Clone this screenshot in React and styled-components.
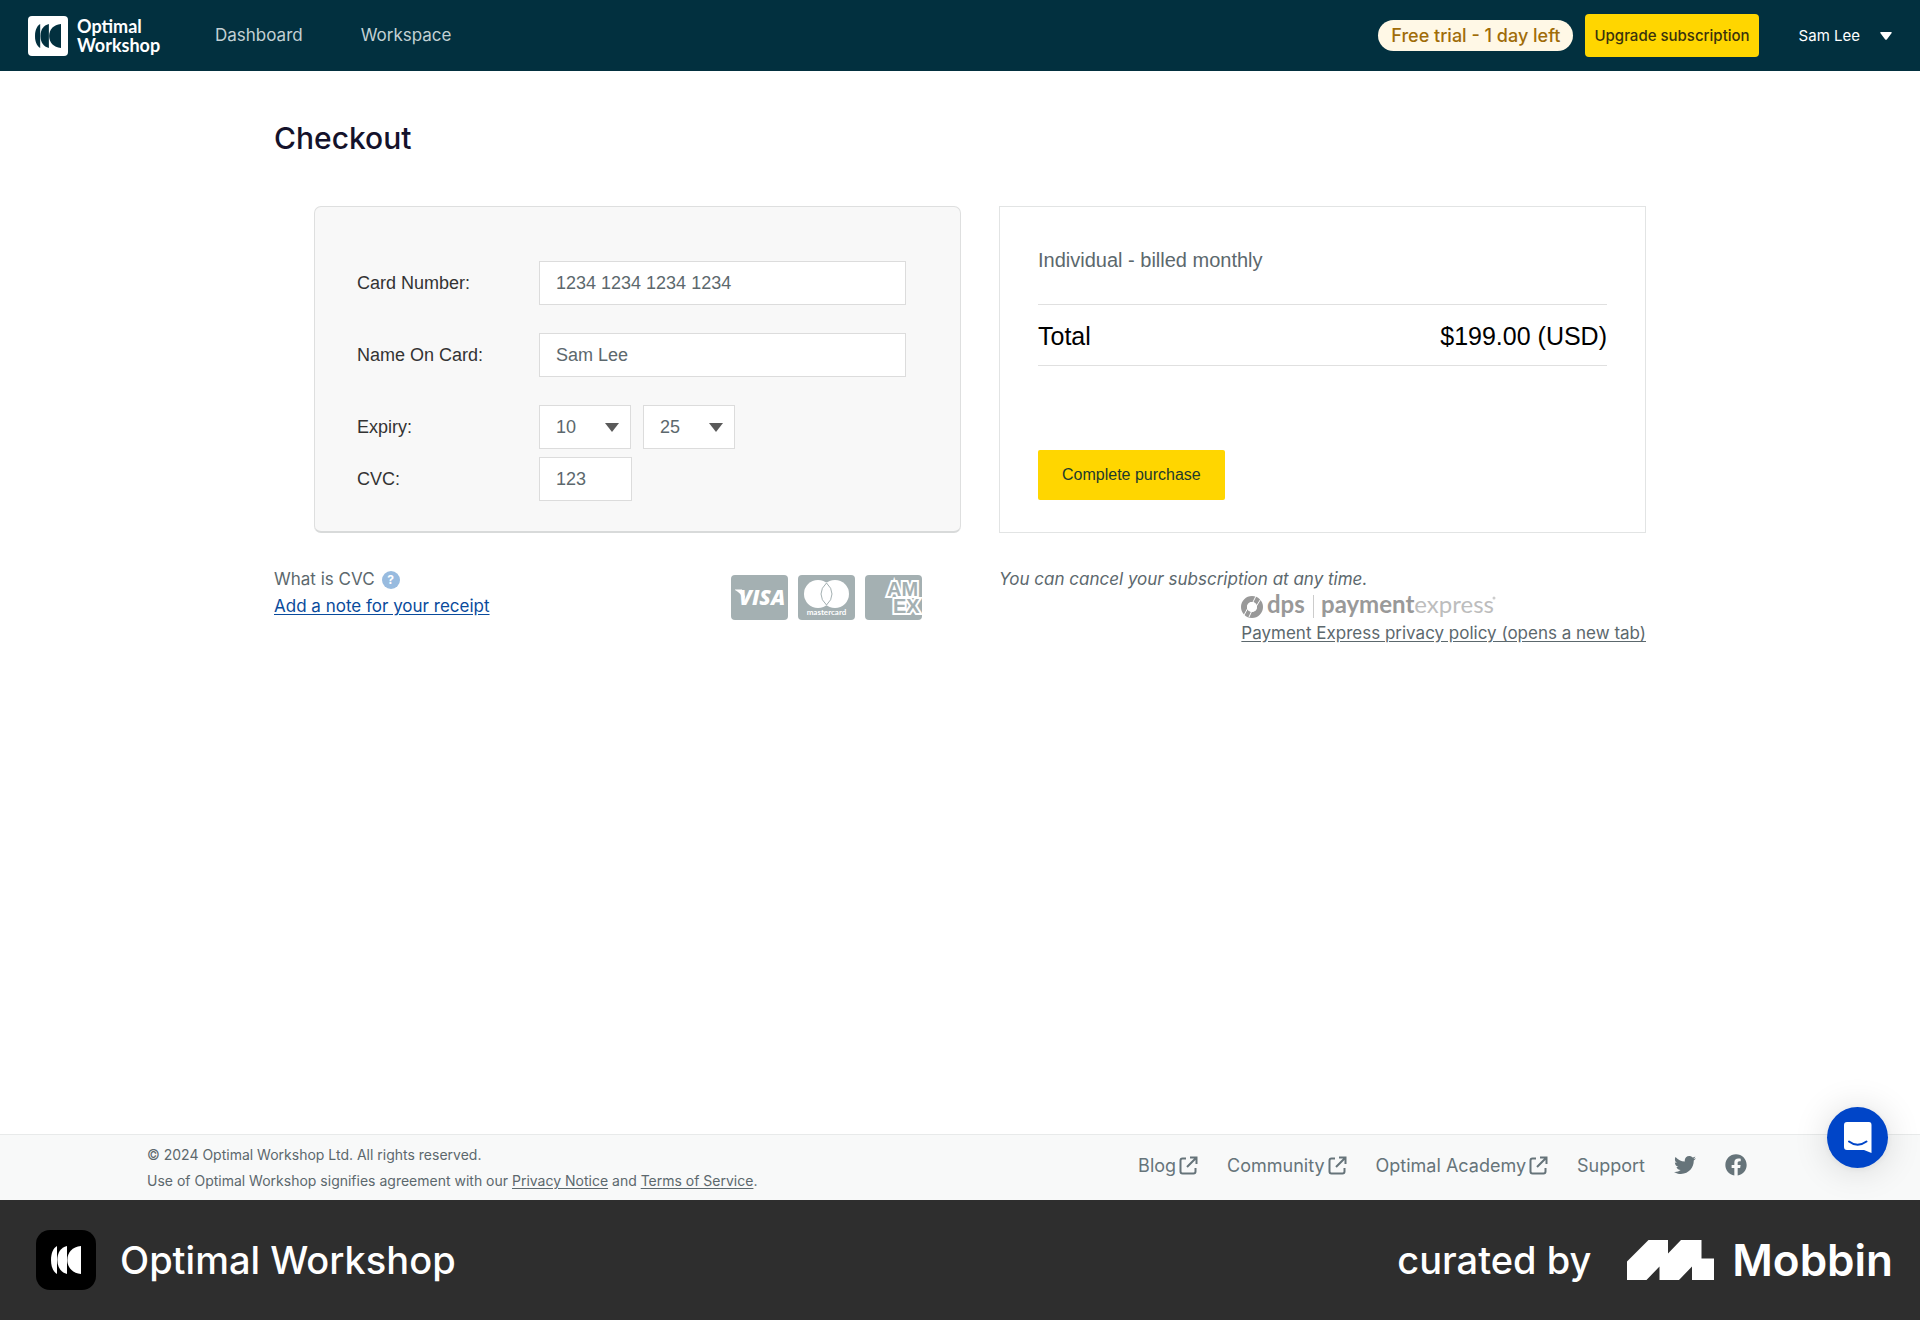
import React from "react";
import styled, { createGlobalStyle } from "styled-components";
import { FaTwitter, FaFacebook } from "react-icons/fa";

const GlobalStyle = createGlobalStyle`
  *, *::before, *::after { box-sizing: border-box; }
  body {
    margin: 0;
    background: #fff;
    color: #5c686d;
    font-family: Inter, "Liberation Sans", sans-serif;
    font-size: 17px;
    line-height: 27px;
  }
  h1, p { margin: 0; }
`;

const arial = `"Liberation Sans", Arial, sans-serif`;

const Page = styled.div`
  min-height: 100vh;
  display: flex;
  flex-direction: column;
`;

const Header = styled.header`
  display: flex;
  align-items: center;
  height: 71px;
  padding: 0 28px;
  background: #02303f;
`;

const Brand = styled.a`
  display: flex;
  align-items: center;
  gap: 9px;
  width: 132px;
  color: #fff;
  text-decoration: none;
  font-family: Lato, sans-serif;
  font-size: 18px;
  font-weight: 700;
  line-height: 19px;
`;

const LogoTile = styled.span`
  display: flex;
  flex: none;
  align-items: center;
  justify-content: center;
  width: ${(p) => p.$size}px;
  height: ${(p) => p.$size}px;
  border-radius: ${(p) => p.$radius}px;
  background: ${(p) => p.$bg};
  color: ${(p) => p.$fg};
`;

const Nav = styled.nav`
  display: flex;
  gap: 58px;
  margin-left: 55px;
`;

const NavLink = styled.a`
  color: #c3d0d4;
  text-decoration: none;
`;

const Account = styled.div`
  display: flex;
  align-items: center;
  margin-left: auto;
`;

const TrialPill = styled.span`
  padding: 2px 13px;
  border-radius: 16px;
  background: #fff8e6;
  color: #a06c08;
  font-size: 18px;
  font-weight: 500;
`;

const UpgradeButton = styled.button`
  height: 43px;
  margin: 0 40px 0 12px;
  padding: 0 9px;
  border: 0;
  border-radius: 4px;
  background: #ffd600;
  color: #3a330c;
  font: 500 15px Inter, sans-serif;
`;

const UserButton = styled.button`
  display: flex;
  align-items: center;
  gap: 20px;
  padding: 0;
  border: 0;
  background: none;
  color: #fff;
  font: 400 15px/27px Inter, sans-serif;
`;

const Main = styled.main`
  flex: 1;
  width: 100%;
  max-width: 1372px;
  margin: 0 auto;
`;

const Title = styled.h1`
  margin: 48px 0;
  color: #14122b;
  font-size: 30px;
  font-weight: 500;
  line-height: 39px;
`;

const Columns = styled.div`
  display: grid;
  grid-template-columns: 1fr 1fr;
  gap: 38px;
  padding-left: 40px;
`;

const PaymentForm = styled.form`
  display: flex;
  flex-direction: column;
  gap: 28px;
  padding: 54px 54px 30px 42px;
  border: 1px solid #dedfdf;
  border-bottom: 2px solid #d8dada;
  border-radius: 7px;
  background: #f8f8f8;
  font-family: ${arial};
`;

const FieldGroup = styled.div`
  display: flex;
  flex-direction: column;
  gap: 8px;
`;

const Field = styled.div`
  display: grid;
  grid-template-columns: 182px 1fr;
  align-items: center;
  color: #333;
  font-size: 18px;
`;

const TextInput = styled.input`
  width: ${(p) => (p.$short ? "93px" : "100%")};
  height: 44px;
  padding: 0 16px;
  border: 1px solid #dcdcdc;
  border-radius: 0;
  background: #fff;
  color: #5c686d;
  font: 18px ${arial};
`;

const Selects = styled.div`
  display: flex;
  gap: 12px;
`;

const SelectBox = styled.div`
  position: relative;
  width: 92px;

  &::after {
    content: "";
    position: absolute;
    top: 18px;
    right: 12px;
    border: 7px solid transparent;
    border-top: 9px solid #5a5a5a;
    border-bottom: 0;
    pointer-events: none;
  }
`;

const Select = styled.select`
  appearance: none;
  width: 100%;
  height: 44px;
  padding: 0 16px;
  border: 1px solid #dcdcdc;
  border-radius: 0;
  background: #fff;
  color: #5c686d;
  font: 18px ${arial};
`;

const Summary = styled.section`
  padding: 38px 38px 31px;
  border: 1px solid #e2e4e4;
  font-family: ${arial};
`;

const Plan = styled.p`
  padding-bottom: 29px;
  font-size: 20px;
  line-height: 30px;
`;

const TotalRow = styled.div`
  display: flex;
  align-items: center;
  justify-content: space-between;
  height: 62px;
  padding-top: 2px;
  border: solid #e0e0e0;
  border-width: 1px 0;
  color: #000;
  font-size: 25px;
`;

const PurchaseButton = styled.button`
  height: 50px;
  margin-top: 84px;
  padding: 0 24px;
  border: 0;
  border-radius: 2px;
  background: #ffd600;
  color: #1d3a2c;
  font: 16px ${arial};
`;

const Notes = styled.div`
  display: grid;
  grid-template-columns: calc(50% + 1px) 1fr;
  gap: 38px;
  margin-top: 33px;
`;

const NoteLeft = styled.div`
  display: flex;
  justify-content: space-between;
  padding-right: 39px;
`;

const CvcHelp = styled.p`
  display: flex;
  align-items: center;
  gap: 7px;
`;

const HelpBadge = styled.button`
  width: 18px;
  height: 18px;
  padding: 0;
  border: 0;
  border-radius: 50%;
  background: #98bbdf;
  color: #fff;
  font: 700 12px/18px Inter, sans-serif;
`;

const ReceiptLink = styled.a`
  color: #0a4b9c;
  text-underline-offset: 2px;
`;

const PaymentCards = styled.div`
  display: flex;
  gap: 10px;
  margin-top: 9px;
`;

const CancelNote = styled.p`
  font-style: italic;
`;

const Processor = styled.div`
  display: flex;
  flex-direction: column;
  align-items: flex-start;
  width: fit-content;
  margin-left: auto;
`;

const LogoLine = styled.div`
  display: flex;
  align-items: flex-end;
  height: 27px;
`;

const PlainLink = styled.a`
  color: inherit;
  text-underline-offset: 2px;
`;

const Footer = styled.footer`
  display: flex;
  justify-content: space-between;
  height: 66px;
  padding: 7px 173px 0 147px;
  border-top: 1px solid #e8eaea;
  background: #f8f9f9;
`;

const Legal = styled.div`
  font-size: 14px;
  line-height: 26px;
`;

const FooterLinks = styled.nav`
  display: flex;
  align-items: center;
  gap: 29px;
  height: 46px;
  font-size: 18px;
`;

const FooterLink = styled.a`
  display: flex;
  align-items: center;
  gap: 3px;
  color: #66747a;
  text-decoration: none;
`;

const Banner = styled.div`
  display: flex;
  align-items: center;
  height: 120px;
  padding: 0 27px 0 36px;
  background: #2e2e2e;
  color: #fff;
  font-size: 38px;
  font-weight: 500;
  line-height: 48px;
`;

const BannerName = styled.span`
  margin-left: 24px;
`;

const Curated = styled.div`
  display: flex;
  align-items: center;
  gap: 36px;
  margin-left: auto;
`;

const Mobbin = styled.div`
  display: flex;
  align-items: center;
  gap: 18px;
  font-size: 44px;
  font-weight: 600;
`;

const Messenger = styled.button`
  position: fixed;
  right: 32px;
  bottom: 152px;
  display: flex;
  align-items: center;
  justify-content: center;
  width: 61px;
  height: 61px;
  padding: 0;
  border: 0;
  border-radius: 50%;
  background: #0045c8;
  box-shadow: 0 2px 36px rgba(0, 0, 0, 0.14), 0 1px 8px rgba(0, 0, 0, 0.06);
`;

function Mark({ width, height }) {
  return (
    <svg width={width} height={height} viewBox="0 0 90 84" preserveAspectRatio="none" fill="currentColor" aria-hidden="true">
      <path d="M90 0 C64 3 49 19 49 42 S64 81 90 84Z" />
      <path d="M48 0 C29 5 19 20 19 42 S29 79 48 84Z" />
      <path d="M18 0 C7 6 0 21 0 42 S7 78 18 84Z" />
    </svg>
  );
}

function External() {
  return (
    <svg width="19" height="19" viewBox="0 0 19 19" fill="none" stroke="currentColor" strokeWidth="2" aria-hidden="true">
      <path d="M7 2.5H3.5Q1.5 2.5 1.5 4.500V15.500Q1.500 17.500 3.500 17.500H14.500Q16.500 17.500 16.500 15.500V12" />
      <path d="M11 1.500H17.500V8M17 2L8 11" />
    </svg>
  );
}

function Visa() {
  return (
    <svg width="57" height="45" viewBox="0 0 57 45" role="img" aria-label="Visa">
      <rect width="57" height="45" rx="4" fill="#a4b0b2" />
      <path d="M4 14.500H11L14 22L12 24Q10 18 4 15Z" fill="#fff" />
      <text x="8" y="30" fill="#fff" fontFamily="Open Sans, sans-serif" fontSize="21" fontWeight="800" fontStyle="italic">VISA</text>
    </svg>
  );
}

function Mastercard() {
  return (
    <svg width="57" height="45" viewBox="0 0 57 45" role="img" aria-label="Mastercard">
      <rect width="57" height="45" rx="4" fill="#a4b0b2" />
      <circle cx="20" cy="19" r="14" fill="#fff" />
      <circle cx="37" cy="19" r="14" fill="#fff" />
      <path d="M28.500 8Q23 13 23 19T28.500 30Q34 25 34 19T28.500 8Z" fill="#fff" stroke="#a4b0b2" />
      <text x="28.500" y="40" textAnchor="middle" fill="#fff" fontFamily="Lato, sans-serif" fontSize="8" fontWeight="700">mastercard</text>
    </svg>
  );
}

function Amex() {
  return (
    <svg width="57" height="45" viewBox="0 0 57 45" role="img" aria-label="American Express">
      <rect width="57" height="45" rx="4" fill="#a4b0b2" />
      <text fill="#a4b0b2" stroke="#fff" strokeWidth="4" paintOrder="stroke" fontFamily="Liberation Sans, sans-serif" fontWeight="700" fontSize="20">
        <tspan x="22" y="21">AM</tspan>
        <tspan x="28" y="38">EX</tspan>
      </text>
    </svg>
  );
}

function PaymentExpress() {
  return (
    <svg width="255" height="31" viewBox="0 -6 255 31" role="img" aria-label="DPS Payment Express">
      <circle cx="11" cy="12" r="8" fill="none" stroke="#999" strokeWidth="6" />
      <path d="M8 15L15 1M13 15L21 2M2 22L9 9M8 22L14 9" stroke="#fff" strokeWidth="1" />
      <circle cx="11" cy="12" r="5" fill="#fff" />
      <text x="26" y="18" fill="#999" fontFamily="Lato, sans-serif" fontSize="24" fontWeight="700">dps</text>
      <path d="M72.500 0V23" stroke="#ccc" />
      <text x="80" y="18" fill="#999" fontFamily="Lato, sans-serif" fontSize="24" fontWeight="700">
        payment<tspan fill="#bdbdbd" fontWeight="400">express</tspan>
      </text>
      <circle cx="253" cy="3" r="1.500" fill="#ccc" />
    </svg>
  );
}

export default function App() {
  return (
    <Page>
      <GlobalStyle />
      <Header>
        <Brand href="#">
          <LogoTile $size={40} $radius={4} $bg="#fff" $fg="#02303f">
            <Mark width={26} height={24} />
          </LogoTile>
          <span>Optimal Workshop</span>
        </Brand>
        <Nav>
          <NavLink href="#">Dashboard</NavLink>
          <NavLink href="#">Workspace</NavLink>
        </Nav>
        <Account>
          <TrialPill>Free trial - 1 day left</TrialPill>
          <UpgradeButton>Upgrade subscription</UpgradeButton>
          <UserButton>
            Sam Lee
            <svg width="12" height="8" viewBox="0 0 12 8" fill="#fff" aria-hidden="true">
              <path d="M1 0H11Q12.500 0 11.500 1.300L7 7.300Q6 8.300 5 7.300L.5 1.300Q-.5 0 1 0Z" />
            </svg>
          </UserButton>
        </Account>
      </Header>

      <Main>
        <Title>Checkout</Title>
        <Columns>
          <PaymentForm>
            <Field>
              <label htmlFor="number">Card Number:</label>
              <TextInput id="number" defaultValue="1234 1234 1234 1234" />
            </Field>
            <Field>
              <label htmlFor="name">Name On Card:</label>
              <TextInput id="name" defaultValue="Sam Lee" />
            </Field>
            <FieldGroup>
              <Field>
                <label htmlFor="month">Expiry:</label>
                <Selects>
                  <SelectBox>
                    <Select id="month" defaultValue="10">
                      <option>10</option>
                    </Select>
                  </SelectBox>
                  <SelectBox>
                    <Select aria-label="Expiry year" defaultValue="25">
                      <option>25</option>
                    </Select>
                  </SelectBox>
                </Selects>
              </Field>
              <Field>
                <label htmlFor="cvc">CVC:</label>
                <TextInput id="cvc" $short defaultValue="123" />
              </Field>
            </FieldGroup>
          </PaymentForm>
          <Summary>
            <Plan>Individual - billed monthly</Plan>
            <TotalRow>
              <span>Total</span>
              <span>$199.00 (USD)</span>
            </TotalRow>
            <PurchaseButton>Complete purchase</PurchaseButton>
          </Summary>
        </Columns>

        <Notes>
          <NoteLeft>
            <div>
              <CvcHelp>
                What is CVC <HelpBadge>?</HelpBadge>
              </CvcHelp>
              <ReceiptLink href="#">Add a note for your receipt</ReceiptLink>
            </div>
            <PaymentCards>
              <Visa />
              <Mastercard />
              <Amex />
            </PaymentCards>
          </NoteLeft>
          <div>
            <CancelNote>You can cancel your subscription at any time.</CancelNote>
            <Processor>
              <LogoLine>
                <PaymentExpress />
              </LogoLine>
              <PlainLink href="#">Payment Express privacy policy (opens a new tab)</PlainLink>
            </Processor>
          </div>
        </Notes>
      </Main>

      <Footer>
        <Legal>
          <p>© 2024 Optimal Workshop Ltd. All rights reserved.</p>
          <p>
            Use of Optimal Workshop signifies agreement with our <PlainLink href="#">Privacy Notice</PlainLink> and{" "}
            <PlainLink href="#">Terms of Service</PlainLink>.
          </p>
        </Legal>
        <FooterLinks>
          <FooterLink href="#">Blog <External /></FooterLink>
          <FooterLink href="#">Community <External /></FooterLink>
          <FooterLink href="#">Optimal Academy <External /></FooterLink>
          <FooterLink href="#">Support</FooterLink>
          <FooterLink href="#" aria-label="Twitter"><FaTwitter size={22} /></FooterLink>
          <FooterLink href="#" aria-label="Facebook"><FaFacebook size={22} /></FooterLink>
        </FooterLinks>
      </Footer>

      <Banner>
        <LogoTile $size={60} $radius={14} $bg="#000" $fg="#fff">
          <Mark width={30} height={28} />
        </LogoTile>
        <BannerName>Optimal Workshop</BannerName>
        <Curated>
          <span>curated by</span>
          <Mobbin>
            <svg width="87" height="40" viewBox="0 0 87 40" fill="#fff" aria-hidden="true">
              <path d="M0 21.500L21.500 0H41V13.500L54 0H74.500V18.500H87V40H65V26.500L52 40H32.500V26.500L19.500 40H0Z" />
            </svg>
            Mobbin
          </Mobbin>
        </Curated>
      </Banner>

      <Messenger aria-label="Open messenger">
        <svg width="28" height="31" viewBox="0 0 28 31" aria-hidden="true">
          <path d="M3 0H25Q27.500 0 27.500 3V31L20 28H3Q0 28 0 25V3Q0 0 3 0Z" fill="#fff" />
          <path d="M5 19.500Q13.500 26 22.500 19.500" fill="none" stroke="#0045c8" strokeWidth="2" strokeLinecap="round" />
        </svg>
      </Messenger>
    </Page>
  );
}
